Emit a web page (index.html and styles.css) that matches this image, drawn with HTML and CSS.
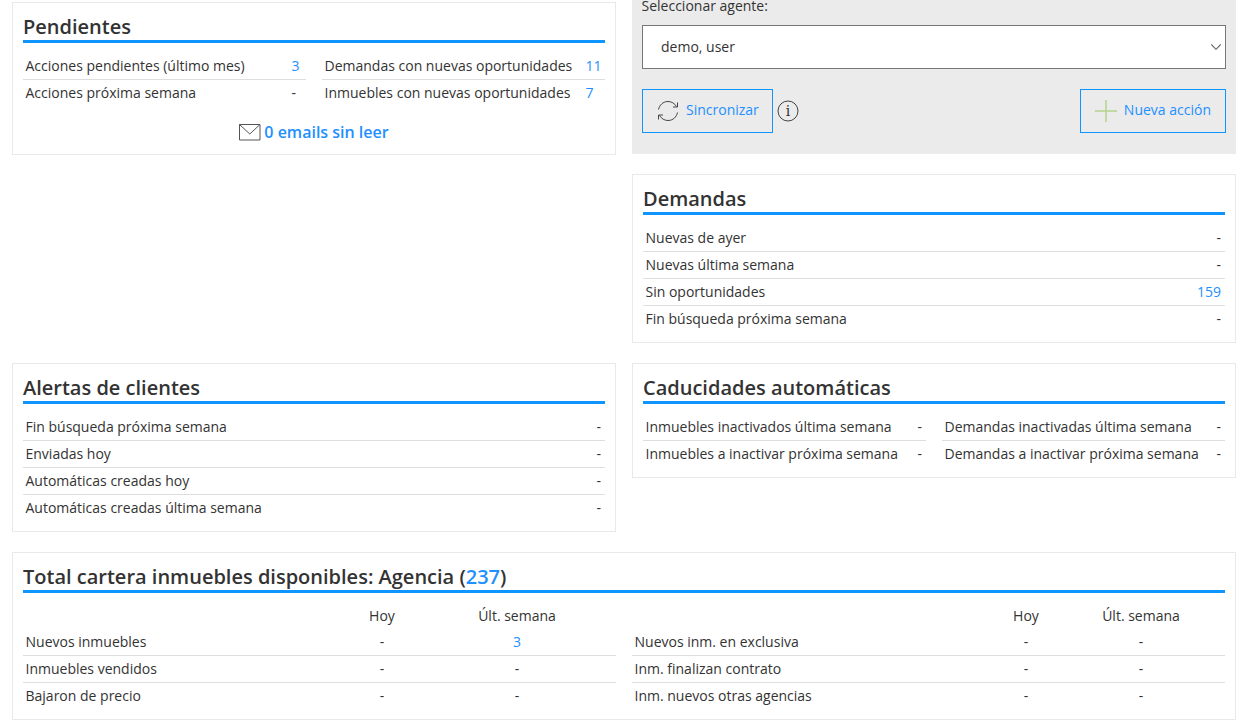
FILE: index.html
```html
<!DOCTYPE html>
<html lang="es">
<head>
<meta charset="utf-8">
<title>Panel</title>
<link rel="stylesheet" href="styles.css">
</head>
<body>
<main class="page">
  <div class="row">
    <section class="panel pend">
      <h2 class="title">Pendientes</h2>
      <div class="cols">
        <div class="col col-a">
          <div class="item"><span>Acciones pendientes (último mes)</span><a class="val">3</a></div>
          <div class="item"><span>Acciones próxima semana</span><span class="val">-</span></div>
        </div>
        <div class="col col-b">
          <div class="item"><span>Demandas con nuevas oportunidades</span><a class="val">11</a></div>
          <div class="item"><span>Inmuebles con nuevas oportunidades</span><a class="val">7</a></div>
        </div>
      </div>
      <div class="mail">
        <svg class="mail-ico" width="22" height="18" viewBox="0 0 22 18"><path d="M.5 1.500h20.500v15.500H.5zM.5 1.500l10.300 9.500L21 1.500" fill="none" stroke="#555" stroke-width="1"/></svg>
        <a class="mail-link">0 emails sin leer</a>
      </div>
    </section>
    <div class="stack">
      <section class="agent">
        <label class="agent-label">Seleccionar agente:</label>
        <div class="select">
          <span class="select-text">demo, user</span>
          <svg width="10" height="6" viewBox="0 0 10 6"><path d="M.3.5 5 5.300 9.700.5" fill="none" stroke="#666" stroke-width="1.100"/></svg>
        </div>
        <div class="actions">
          <button class="btn btn-sync">
            <svg width="22" height="22" viewBox="0 0 22 22"><g fill="none" stroke="#444" stroke-width="1"><path d="M1.500 9.500C2.500 5 6 1.500 11 1.500c3.600 0 6.500 1.800 8.500 5"/><path d="M20.500 12.500c-1 4.500-4.500 8-9.500 8-3.600 0-6.500-1.800-8.500-5"/><path d="M20.500 2.500v4.500h-4.500"/><path d="M1.500 19.500v-4.500h4.500"/></g></svg>
            <span class="btn-text">Sincronizar</span>
          </button>
          <svg class="info" width="22" height="22" viewBox="0 0 22 22"><circle cx="11" cy="11" r="10" fill="none" stroke="#444" stroke-width="1"/><text x="11" y="16" text-anchor="middle" class="info-i">i</text></svg>
          <button class="btn btn-new">
            <svg width="22" height="22" viewBox="0 0 22 22"><path d="M11 0v22M0 11h22" stroke="#b5d38e" stroke-width="1.500"/></svg>
            <span class="btn-text">Nueva acción</span>
          </button>
        </div>
      </section>
      <section class="panel">
        <h2 class="title">Demandas</h2>
        <div class="item"><span>Nuevas de ayer</span><span class="val">-</span></div>
        <div class="item"><span>Nuevas última semana</span><span class="val">-</span></div>
        <div class="item"><span>Sin oportunidades</span><a class="val">159</a></div>
        <div class="item"><span>Fin búsqueda próxima semana</span><span class="val">-</span></div>
      </section>
    </div>
  </div>
  <div class="row">
    <section class="panel">
      <h2 class="title">Alertas de clientes</h2>
      <div class="item"><span>Fin búsqueda próxima semana</span><span class="val">-</span></div>
      <div class="item"><span>Enviadas hoy</span><span class="val">-</span></div>
      <div class="item"><span>Automáticas creadas hoy</span><span class="val">-</span></div>
      <div class="item"><span>Automáticas creadas última semana</span><span class="val">-</span></div>
    </section>
    <section class="panel">
      <h2 class="title">Caducidades automáticas</h2>
      <div class="cols">
        <div class="col">
          <div class="item"><span>Inmuebles inactivados última semana</span><span class="val">-</span></div>
          <div class="item"><span>Inmuebles a inactivar próxima semana</span><span class="val">-</span></div>
        </div>
        <div class="col">
          <div class="item"><span>Demandas inactivadas última semana</span><span class="val">-</span></div>
          <div class="item"><span>Demandas a inactivar próxima semana</span><span class="val">-</span></div>
        </div>
      </div>
    </section>
  </div>
  <section class="panel">
    <h2 class="title">Total cartera inmuebles disponibles: Agencia (<a class="title-link">237</a>)</h2>
    <div class="tables">
      <div class="tbl tbl-a">
        <div class="tr th"><span></span><span>Hoy</span><span>Últ. semana</span></div>
        <div class="tr"><span>Nuevos inmuebles</span><span>-</span><a>3</a></div>
        <div class="tr"><span>Inmuebles vendidos</span><span>-</span><span>-</span></div>
        <div class="tr"><span>Bajaron de precio</span><span>-</span><span>-</span></div>
      </div>
      <div class="tbl tbl-b">
        <div class="tr th"><span></span><span>Hoy</span><span>Últ. semana</span></div>
        <div class="tr"><span>Nuevos inm. en exclusiva</span><span>-</span><span>-</span></div>
        <div class="tr"><span>Inm. finalizan contrato</span><span>-</span><span>-</span></div>
        <div class="tr"><span>Inm. nuevos otras agencias</span><span>-</span><span>-</span></div>
      </div>
    </div>
  </section>
</main>
</body>
</html>
```
FILE: styles.css
```css
* { box-sizing: border-box; }
html, body { margin: 0; height: 724px; overflow: hidden; background: #fff; }
body { font-family: "Open Sans", sans-serif; font-size: 14px; color: #333; }
a { color: #1e90ff; }
.page { width: 1224px; margin: -18px 0 0 12px; display: flex; flex-direction: column; gap: 20px; }
.row { display: grid; grid-template-columns: 604px 604px; column-gap: 16px; align-items: start; }
.stack { display: flex; flex-direction: column; gap: 20px; }
.panel { background: #fff; border: 1px solid #e9e9e9; padding: 10px 10px 9px; }
.pend { margin-top: 20px; padding-bottom: 10px; }
.title { margin: 0 0 10px; height: 30px; font-size: 20px; line-height: 27px; font-weight: 600; color: #333; border-bottom: 3px solid #0f95ff; }
.title-link { color: #1e90ff; }
.cols { display: grid; grid-template-columns: 283px 283px; column-gap: 16px; }
.item { display: flex; justify-content: space-between; height: 27px; line-height: 26px; padding: 0 4px 0 2.500px; border-bottom: 1px solid #dedede; }
.item:last-child { border-bottom: 0; }
.val { display: block; }
.col-a .val { width: 10.500px; }
.col-b .val { width: 15.500px; }
.mail { display: flex; justify-content: center; align-items: center; gap: 3px; margin-top: 13px; height: 24px; padding-bottom: 1px; }
.mail-link { font-size: 16px; font-weight: 600; }
.agent { background: #ebebeb; height: 172px; padding: 14px 10px 0; }
.agent-label { display: block; line-height: 20px; margin-left: -0.500px; }
.select { margin-top: 9px; height: 44px; background: #fff; border: 1px solid #777; display: flex; align-items: center; justify-content: space-between; padding: 0 4px 0 18px; }
.select-text { margin-bottom: 2px; }
.actions { margin-top: 20px; display: flex; align-items: center; gap: 4px; }
.btn { height: 44px; border: 1px solid #0f95ff; background: transparent; color: #1e90ff; font: 14px "Open Sans", sans-serif; display: flex; align-items: center; gap: 7px; padding: 0 14px; }
.btn-sync { padding-right: 13px; }
.btn-text { margin-bottom: 3px; }
.btn-new { margin-left: auto; }
.info-i { font-family: "DejaVu Serif", serif; font-size: 14px; fill: #333; }
.tables { display: grid; grid-template-columns: 593px 593px; column-gap: 16px; }
.tbl { display: flex; flex-direction: column; }
.tr { display: grid; height: 27px; line-height: 26px; border-bottom: 1px solid #dedede; padding-left: 2.500px; }
.tbl-a .tr { grid-template-columns: 320.500px 72px 198px; }
.tbl-b .tr { grid-template-columns: 360.500px 62px 168px; }
.tr > :not(:first-child) { text-align: center; }
.tr:last-child { border-bottom: 0; }
.th { border-bottom: 0; height: 26px; }
```
